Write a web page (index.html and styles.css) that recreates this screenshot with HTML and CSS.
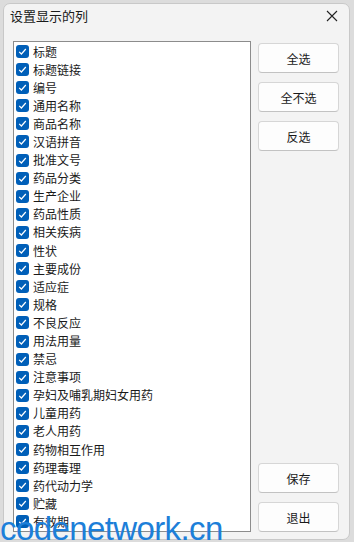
FILE: index.html
```html
<!DOCTYPE html>
<html lang="zh-CN">
<head>
  <meta charset="UTF-8">
  <meta name="viewport" content="width=device-width, initial-scale=1.0">
  <title>设置显示的列</title>
  <link rel="stylesheet" href="styles.css">
</head>
<body>

  <div class="window">
    <div class="titlebar">
      <span class="title">设置显示的列</span>
      <span class="close">
        <svg width="12" height="12" viewBox="0 0 12 12"><path d="M1 1L11 11M11 1L1 11" stroke="#222" stroke-width="1.1"/></svg>
      </span>
    </div>

    <div class="content">
      <!-- Column list -->
      <div class="listbox" id="column-list"></div>

      <!-- Buttons -->
      <div class="buttons">
        <div class="btn-group">
          <button class="button">全选</button>
          <button class="button">全不选</button>
          <button class="button">反选</button>
        </div>
        <div class="btn-group">
          <button class="button">保存</button>
          <button class="button">退出</button>
        </div>
      </div>
    </div>
  </div>

  <div class="watermark">codenetwork.cn</div>

  <script>
    const columns = ['标题', '标题链接', '编号', '通用名称', '商品名称', '汉语拼音', '批准文号',
      '药品分类', '生产企业', '药品性质', '相关疾病', '性状', '主要成份', '适应症', '规格',
      '不良反应', '用法用量', '禁忌', '注意事项', '孕妇及哺乳期妇女用药', '儿童用药', '老人用药',
      '药物相互作用', '药理毒理', '药代动力学', '贮藏', '有效期'];

    const list = document.getElementById('column-list');
    columns.forEach(name => {
      const row = document.createElement('div');
      row.className = 'item';
      row.innerHTML = `
        <span class="check"><svg width="9" height="9" viewBox="0 0 9 9"><path d="M1.2 4.8L3.4 7L7.8 2" fill="none" stroke="#fff" stroke-width="1.2"/></svg></span>
        <span class="label">${name}</span>
      `;
      list.appendChild(row);
    });
  </script>

</body>
</html>
```

FILE: styles.css
```css
body {
  margin: 0;
  padding: 3px 4px 2px 3px;
  background: #dcdcdc;
  font-family: "Noto Sans CJK SC", "Noto Sans", sans-serif;
  height: 542px;
  box-sizing: border-box;
  overflow: hidden;
}

.window {
  height: 537px;
  background: #f3f3f3;
  border: 1px solid #c8c8c8;
  border-radius: 7px;
  box-sizing: border-box;
  display: flex;
  flex-direction: column;
  overflow: hidden;
}

.titlebar {
  height: 40px;
  display: flex;
  justify-content: space-between;
  align-items: flex-start;
  padding: 2px 6px 0 6px;
  box-sizing: border-box;
}

.title {
  font-size: 13px;
  line-height: 19px;
  color: #1a1a1a;
}

.close {
  display: flex;
  width: 22px;
  height: 19px;
  align-items: center;
  justify-content: center;
}

.content {
  flex: 1;
  display: flex;
  padding: 1px 10px 7px 9px;
  gap: 7px;
}

.listbox {
  width: 238px;
  background: #fff;
  border: 1px solid #8c8c8c;
  box-sizing: border-box;
  padding-top: 0;
  overflow: hidden;
}

.item {
  height: 18.1px;
  display: flex;
  align-items: center;
  padding-left: 2px;
  gap: 4px;
}

.check {
  width: 13px;
  height: 13px;
  border-radius: 3px;
  background: #005fb8;
  display: flex;
  align-items: center;
  justify-content: center;
}

.label {
  font-size: 12px;
  color: #1a1a1a;
  line-height: 18px;
}

.buttons {
  flex: 1;
  display: flex;
  flex-direction: column;
  justify-content: space-between;
  padding-top: 2px;
}

.btn-group {
  display: flex;
  flex-direction: column;
  gap: 9px;
}

.button {
  height: 30px;
  background: #fdfdfd;
  border: 1px solid #d6d6d6;
  border-bottom-color: #c2c2c2;
  border-radius: 4px;
  font-family: "Noto Sans CJK SC", "Noto Sans", sans-serif;
  font-size: 12px;
  color: #1a1a1a;
  padding: 0;
}

.watermark {
  position: absolute;
  left: 0;
  top: 512px;
  font-family: "Liberation Sans", Arial, sans-serif;
  font-size: 33px;
  color: #1d7fd9;
  line-height: 34px;
  letter-spacing: -0.6px;
}
```
